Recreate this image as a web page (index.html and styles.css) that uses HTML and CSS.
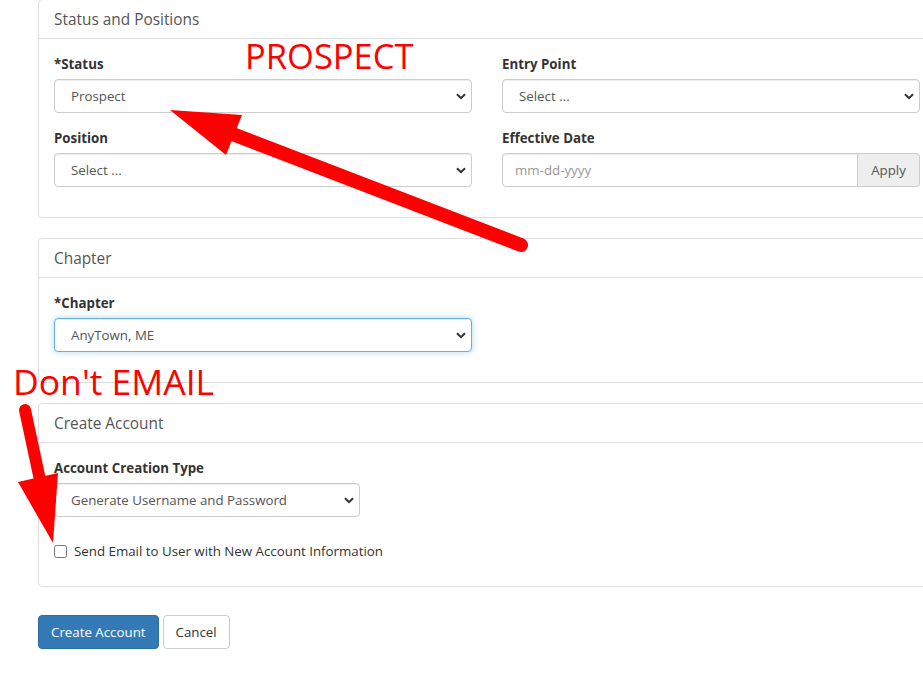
FILE: index.html
```html
<!DOCTYPE html>
<html lang="en">
<head>
    <meta charset="UTF-8">
    <title>Create Account</title>
    <link rel="stylesheet" href="styles.css">
</head>
<body>
    <div class="page">
        <div class="panel">
            <div class="panel-heading">Status and Positions</div>
            <div class="panel-body">
                <div class="row">
                    <div class="col">
                        <div class="form-group">
                            <label>*Status</label>
                            <select class="form-control"><option>Prospect</option></select>
                        </div>
                        <div class="form-group">
                            <label>Position</label>
                            <select class="form-control"><option>Select ...</option></select>
                        </div>
                    </div>
                    <div class="col">
                        <div class="form-group">
                            <label>Entry Point</label>
                            <select class="form-control"><option>Select ...</option></select>
                        </div>
                        <div class="form-group">
                            <label>Effective Date</label>
                            <div class="input-group">
                                <input class="form-control" type="text" placeholder="mm-dd-yyyy">
                                <span class="addon">Apply</span>
                            </div>
                        </div>
                    </div>
                </div>
            </div>
        </div>

        <div class="panel">
            <div class="panel-heading">Chapter</div>
            <div class="panel-body">
                <div class="row">
                    <div class="col">
                        <div class="form-group">
                            <label>*Chapter</label>
                            <select class="form-control focused"><option>AnyTown, ME</option></select>
                        </div>
                    </div>
                </div>
            </div>
        </div>

        <div class="panel">
            <div class="panel-heading">Create Account</div>
            <div class="panel-body">
                <div class="form-group">
                    <label>Account Creation Type</label>
                    <select class="form-control narrow"><option>Generate Username and Password</option></select>
                </div>
                <div class="checkbox">
                    <input type="checkbox" id="sendEmail">
                    <label for="sendEmail">Send Email to User with New Account Information</label>
                </div>
            </div>
        </div>

        <div class="actions">
            <button class="btn btn-primary">Create Account</button>
            <button class="btn btn-default">Cancel</button>
        </div>
    </div>

    <!-- red annotations drawn on top of the screenshot -->
    <div class="note note-prospect">PROSPECT</div>
    <div class="note note-email">Don't EMAIL</div>
    <svg class="arrows" width="923" height="677" viewBox="0 0 923 677">
        <line x1="521" y1="245" x2="222" y2="130" stroke="#f00" stroke-width="14" stroke-linecap="round"/>
        <polygon points="170,110 242,115 226,155" fill="#f00"/>
        <line x1="25" y1="410" x2="40" y2="480" stroke="#f00" stroke-width="12" stroke-linecap="round"/>
        <polygon points="53,543 18,482 58,473" fill="#f00"/>
    </svg>
</body>
</html>
```

FILE: styles.css
```css
body, html {
    margin: 0;
    padding: 0;
    overflow: hidden;
    background: #fff;
}
body {
    font-family: "Open Sans", "Noto Sans", sans-serif;
    font-size: 13.3px;
    line-height: 20px;
    color: #333;
}
.page {
    margin-top: -1px;
    padding-left: 38px;
    width: 898px;
}
.panel {
    border: 1px solid #ddd;
    border-radius: 4px;
    margin-bottom: 20px;
    background: #fff;
}
.panel-heading {
    padding: 11px 15px 9px;
    font-size: 15.4px;
    line-height: 18px;
    color: #555;
    border-bottom: 1px solid #ddd;
}
.panel-body {
    padding: 15px;
}
.row {
    display: grid;
    grid-template-columns: 1fr 1fr;
    column-gap: 30px;
}
.form-group {
    margin-bottom: 15px;
}
label {
    display: block;
    font-weight: bold;
    font-size: 13.3px;
    margin-bottom: 5px;
}
.form-control {
    display: block;
    box-sizing: border-box;
    width: 100%;
    height: 34px;
    padding: 6px 12px 6px 16px;
    font-family: inherit;
    font-size: 13.3px;
    color: #555;
    background: #fff;
    border: 1px solid #ccc;
    border-radius: 4px;
    box-shadow: inset 0 1px 1px rgba(0,0,0,.075);
    outline: none;
}
select.form-control {
    appearance: none;
    -webkit-appearance: none;
    background-image: url("data:image/svg+xml,%3Csvg xmlns='http://www.w3.org/2000/svg' width='10' height='7' viewBox='0 0 10 7'%3E%3Cpath d='M1 1.2 5 5.2 9 1.2' fill='none' stroke='%23333' stroke-width='2'/%3E%3C/svg%3E");
    background-repeat: no-repeat;
    background-position: right 5px center;
}
.form-control::placeholder {
    color: #999;
}
.form-control.focused {
    border-color: #66afe9;
    box-shadow: inset 0 1px 1px rgba(0,0,0,.075), 0 0 6px rgba(102,175,233,.5);
}
.form-control.narrow {
    width: 306px;
}
.input-group {
    display: flex;
}
.input-group .form-control {
    flex: 1;
    border-radius: 4px 0 0 4px;
    padding-left: 12px;
}
.addon {
    box-sizing: border-box;
    width: 62px;
    height: 34px;
    padding: 6px 0;
    text-align: center;
    color: #555;
    background: #eee;
    border: 1px solid #ccc;
    border-left: 0;
    border-radius: 0 4px 4px 0;
}
.checkbox {
    display: flex;
    align-items: center;
    margin: 24px 0 10px;
    min-height: 20px;
}
.checkbox input {
    margin: 0 7px 0 0;
    width: 13px;
    height: 13px;
}
.checkbox label {
    font-weight: normal;
    margin: 0;
}
.actions {
    margin-top: 28px;
    display: flex;
    gap: 4px;
}
.btn {
    height: 34px;
    padding: 6px 12px;
    font-family: inherit;
    font-size: 13.3px;
    border-radius: 4px;
    border: 1px solid #ccc;
}
.btn-primary {
    color: #fff;
    background: #337ab7;
    border-color: #2e6da4;
}
.btn-default {
    color: #333;
    background: #fff;
}
.note {
    position: absolute;
    color: #f00;
    font-family: "Open Sans", sans-serif;
    line-height: 1;
}
.note-prospect {
    left: 245px;
    top: 39px;
    font-size: 34.5px;
}
.note-email {
    left: 13px;
    top: 364px;
    font-size: 35.5px;
}
.arrows {
    position: absolute;
    left: 0;
    top: 0;
    pointer-events: none;
}
```
